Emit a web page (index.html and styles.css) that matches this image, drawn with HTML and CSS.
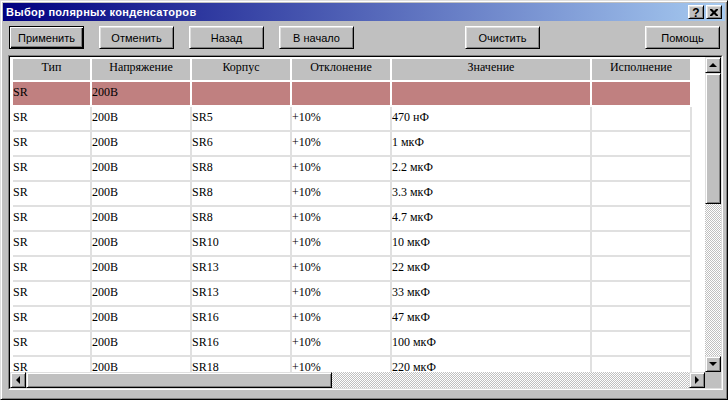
FILE: index.html
```html
<!DOCTYPE html>
<html lang="ru">
<head>
<meta charset="utf-8">
<title>Выбор полярных конденсаторов</title>
<link rel="stylesheet" href="styles.css">
</head>
<body>
<div class="window">
  <div class="titlebar">
    <span class="title">Выбор полярных конденсаторов</span>
    <div class="caption-btns">
      <div class="cap-btn help">?</div>
      <div class="cap-btn close">
        <svg width="8" height="7" viewBox="0 0 8 7"><path d="M0 0h2l2 2 2-2h2v1l-2.5 2.5L8 6v1H6L4 5 2 7H0V6l2.5-2.5L0 1z" fill="#000"/></svg>
      </div>
    </div>
  </div>
  <div class="toolbar">
    <button class="btn default"><span>Применить</span></button>
    <button class="btn">Отменить</button>
    <button class="btn">Назад</button>
    <button class="btn">В начало</button>
    <button class="btn clear">Очистить</button>
    <button class="btn help-btn">Помощь</button>
  </div>
  <div class="frame">
    <div class="frame-inner">
      <div class="view">
        <div class="grid">
          <div class="row head">
            <div class="c c1">Тип</div><div class="c">Напряжение</div><div class="c">Корпус</div><div class="c">Отклонение</div><div class="c c5">Значение</div><div class="c">Исполнение</div>
          </div>
          <div class="row sel">
            <div class="c c1">SR</div><div class="c">200B</div><div class="c"></div><div class="c"></div><div class="c c5"></div><div class="c"></div>
          </div>
          <div class="row"><div class="c c1">SR</div><div class="c">200B</div><div class="c">SR5</div><div class="c">+10%</div><div class="c c5">470 нФ</div><div class="c"></div></div>
          <div class="row"><div class="c c1">SR</div><div class="c">200B</div><div class="c">SR6</div><div class="c">+10%</div><div class="c c5">1 мкФ</div><div class="c"></div></div>
          <div class="row"><div class="c c1">SR</div><div class="c">200B</div><div class="c">SR8</div><div class="c">+10%</div><div class="c c5">2.2 мкФ</div><div class="c"></div></div>
          <div class="row"><div class="c c1">SR</div><div class="c">200B</div><div class="c">SR8</div><div class="c">+10%</div><div class="c c5">3.3 мкФ</div><div class="c"></div></div>
          <div class="row"><div class="c c1">SR</div><div class="c">200B</div><div class="c">SR8</div><div class="c">+10%</div><div class="c c5">4.7 мкФ</div><div class="c"></div></div>
          <div class="row"><div class="c c1">SR</div><div class="c">200B</div><div class="c">SR10</div><div class="c">+10%</div><div class="c c5">10 мкФ</div><div class="c"></div></div>
          <div class="row"><div class="c c1">SR</div><div class="c">200B</div><div class="c">SR13</div><div class="c">+10%</div><div class="c c5">22 мкФ</div><div class="c"></div></div>
          <div class="row"><div class="c c1">SR</div><div class="c">200B</div><div class="c">SR13</div><div class="c">+10%</div><div class="c c5">33 мкФ</div><div class="c"></div></div>
          <div class="row"><div class="c c1">SR</div><div class="c">200B</div><div class="c">SR16</div><div class="c">+10%</div><div class="c c5">47 мкФ</div><div class="c"></div></div>
          <div class="row"><div class="c c1">SR</div><div class="c">200B</div><div class="c">SR16</div><div class="c">+10%</div><div class="c c5">100 мкФ</div><div class="c"></div></div>
          <div class="row"><div class="c c1">SR</div><div class="c">200B</div><div class="c">SR18</div><div class="c">+10%</div><div class="c c5">220 мкФ</div><div class="c"></div></div>
        </div>
        <div class="vscroll">
          <div class="sbtn"><i class="arr up"></i></div>
          <div class="vthumb"></div>
          <div class="track"></div>
          <div class="sbtn"><i class="arr down"></i></div>
        </div>
      </div>
      <div class="hscroll">
        <div class="sbtn"><i class="arr left"></i></div>
        <div class="hthumb"></div>
        <div class="track"></div>
        <div class="sbtn"><i class="arr right"></i></div>
        <div class="corner"></div>
      </div>
    </div>
  </div>
</div>
</body>
</html>
```
FILE: styles.css
```css
* { box-sizing: border-box; }
html, body { margin: 0; padding: 0; background: #c0c0c0; }

.window {
  width: 728px;
  height: 400px;
  background: #c0c0c0;
  border: 1px solid;
  border-color: #dfdfdf #000 #000 #dfdfdf;
  box-shadow: inset 1px 1px #fff, inset -1px -1px #808080;
  padding: 2px;
  display: flex;
  flex-direction: column;
  font-family: "Liberation Sans", Arial, sans-serif;
  font-size: 11px;
}

.titlebar {
  height: 18px;
  flex: none;
  display: flex;
  align-items: center;
  background: linear-gradient(to right, #000080, #a6caf0);
  padding-left: 3px;
  padding-right: 3px;
}
.title {
  color: #fff;
  font-weight: bold;
  font-size: 11px;
  letter-spacing: 0.3px;
  flex: 1;
  white-space: nowrap;
}
.caption-btns { display: flex; gap: 2px; }
.cap-btn {
  width: 16px;
  height: 14px;
  background: #c0c0c0;
  border: 1px solid;
  border-color: #fff #000 #000 #fff;
  box-shadow: inset 1px 1px #dfdfdf, inset -1px -1px #808080;
  display: flex;
  align-items: center;
  justify-content: center;
}
.cap-btn.help {
  font-weight: bold;
  font-size: 12px;
  line-height: 12px;
  color: #000;
  padding-top: 1px;
}

.toolbar {
  flex: none;
  height: 23px;
  margin-top: 5px;
  padding-left: 6px;
  display: flex;
  gap: 15px;
}
.btn {
  width: 75px;
  height: 23px;
  padding: 0;
  margin: 0;
  background: #c0c0c0;
  border: 1px solid;
  border-color: #fff #000 #000 #fff;
  box-shadow: inset 1px 1px #dfdfdf, inset -1px -1px #808080;
  font-family: "Liberation Sans", Arial, sans-serif;
  font-size: 11px;
  color: #000;
  text-align: center;
}
.btn.default {
  border-color: #000;
  box-shadow: inset 1px 1px #fff, inset -1px -1px #000, inset -2px -2px #808080;
}
.btn.clear { margin-left: 96px; }
.btn.help-btn { margin-left: 90px; }

.frame {
  flex: none;
  margin: 6px 2px 0 5px;
  height: 335px;
  border: 1px solid;
  border-color: #808080 #fff #fff #808080;
}
.frame-inner {
  height: 100%;
  border: 1px solid;
  border-color: #000 #dfdfdf #dfdfdf #000;
  display: flex;
  flex-direction: column;
}

.view {
  height: 315px;
  display: flex;
  flex: none;
}
.grid {
  flex: 1;
  background: #fff;
  overflow: hidden;
  padding: 2px 0 0 3px;
  font-family: "Liberation Serif", "Times New Roman", serif;
  font-size: 12px;
  color: #000;
}
.row {
  display: flex;
  height: 25px;
}
.c {
  width: 100px;
  flex: none;
  border-right: 2px solid #e0e0e0;
  border-bottom: 2px solid #e0e0e0;
  padding-top: 3px;
  line-height: 14px;
  white-space: nowrap;
  overflow: hidden;
}
.c.c1 { width: 79px; }
.c.c5 { width: 200px; }

.row.head { height: 23px; }
.row.head .c {
  background: #c0c0c0;
  border-color: #fff;
  text-align: center;
  padding-top: 2px;
  line-height: 13px;
}
.row.sel .c {
  background: #c08080;
  border-color: #fff;
}

.vscroll {
  width: 16px;
  flex: none;
  display: flex;
  flex-direction: column;
}
.sbtn {
  width: 16px;
  height: 16px;
  flex: none;
  background: #c0c0c0;
  border: 1px solid;
  border-color: #dfdfdf #000 #000 #dfdfdf;
  box-shadow: inset 1px 1px #fff, inset -1px -1px #808080;
  display: flex;
  align-items: center;
  justify-content: center;
}
.vthumb {
  height: 131px;
  flex: none;
  background: #c0c0c0;
  border: 1px solid;
  border-color: #dfdfdf #000 #000 #dfdfdf;
  box-shadow: inset 1px 1px #fff, inset -1px -1px #808080;
}
.track {
  flex: 1;
  background-color: #fff;
  background-image: repeating-conic-gradient(#c0c0c0 0 25%, #fff 0 50%);
  background-size: 2px 2px;
}
.hscroll {
  height: 16px;
  flex: none;
  display: flex;
}
.hthumb {
  width: 306px;
  flex: none;
  background: #c0c0c0;
  border: 1px solid;
  border-color: #dfdfdf #000 #000 #dfdfdf;
  box-shadow: inset 1px 1px #fff, inset -1px -1px #808080;
}
.corner {
  width: 16px;
  flex: none;
  background: #c0c0c0;
}

.arr { display: block; width: 0; height: 0; border-style: solid; }
.arr.up { border-width: 0 4px 4px 4px; border-color: transparent transparent #000 transparent; }
.arr.down { border-width: 4px 4px 0 4px; border-color: #000 transparent transparent transparent; }
.arr.left { border-width: 4px 4px 4px 0; border-color: transparent #000 transparent transparent; }
.arr.right { border-width: 4px 0 4px 4px; border-color: transparent transparent transparent #000; }
```
